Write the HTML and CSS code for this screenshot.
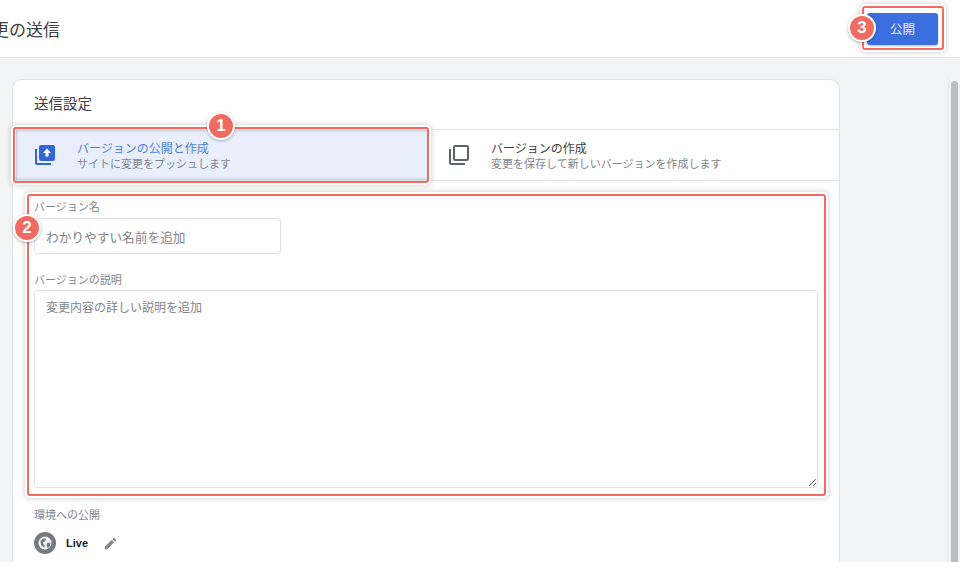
FILE: index.html
```html
<!DOCTYPE html>
<html lang="ja">
<head>
    <meta charset="UTF-8">
    <meta name="viewport" content="width=device-width, initial-scale=1.0">
    <title>変更の送信</title>
    <link rel="stylesheet" href="styles.css">
</head>
<body>
    <header class="topbar">
        <h1 class="page-title">変更の送信</h1>
        <button type="button" class="publish">公開</button>
    </header>
    <div class="content">
        <main class="card">
            <h2 class="card-title">送信設定</h2>
            <div class="tabs">
                <div class="tab tab-active">
                    <svg class="tab-icon" viewBox="0 0 24 24" width="24" height="24">
                        <path fill="#3367d6" d="M2 6h2v14h14v2H4a2 2 0 0 1-2-2V6z"/>
                        <path fill="#3367d6" d="M8 2h12a2 2 0 0 1 2 2v12a2 2 0 0 1-2 2H8a2 2 0 0 1-2-2V4a2 2 0 0 1 2-2z"/>
                        <path fill="#fff" d="M14 5.500l4 4.500h-2.500v3.500h-3V10H10z"/>
                    </svg>
                    <div class="tab-text">
                        <div class="tab-name">バージョンの公開と作成</div>
                        <div class="tab-desc">サイトに変更をプッシュします</div>
                    </div>
                </div>
                <div class="tab">
                    <svg class="tab-icon" viewBox="0 0 24 24" width="24" height="24">
                        <path fill="#5f6368" d="M2 6h2v14h14v2H4a2 2 0 0 1-2-2V6z"/>
                        <path fill="#5f6368" d="M8 2h12a2 2 0 0 1 2 2v12a2 2 0 0 1-2 2H8a2 2 0 0 1-2-2V4a2 2 0 0 1 2-2zm0 2v12h12V4H8z"/>
                    </svg>
                    <div class="tab-text">
                        <div class="tab-name">バージョンの作成</div>
                        <div class="tab-desc">変更を保存して新しいバージョンを作成します</div>
                    </div>
                </div>
            </div>
            <form class="version-form">
                <label class="field-label" for="versionName">バージョン名</label>
                <input class="name-input" type="text" id="versionName" placeholder="わかりやすい名前を追加">
                <label class="field-label desc-label" for="versionDesc">バージョンの説明</label>
                <textarea class="desc-input" id="versionDesc" placeholder="変更内容の詳しい説明を追加"></textarea>
                <div class="field-label env-label">環境への公開</div>
                <div class="env-row">
                    <svg class="env-icon" viewBox="0 0 22 22" width="22" height="22">
                        <circle cx="11" cy="11" r="11" fill="#757a80"/>
                        <circle cx="11" cy="11" r="6.500" fill="#f1f3f4"/>
                        <path fill="#757a80" d="M6.500 9l2.500-2.500 3 .5-1 2.500-2 .5.500 2.500 1.500 1-1 2-3-2.500zM13.500 10.500l3 .5-1 4-2 1-1-3z"/>
                    </svg>
                    <span class="env-name">Live</span>
                    <svg class="env-edit" viewBox="0 0 24 24" width="15" height="15">
                        <path fill="#80868b" d="M3 17.250V21h3.750L17.810 9.940l-3.750-3.750L3 17.250zM20.710 7.040a1 1 0 0 0 0-1.410l-2.340-2.340a1 1 0 0 0-1.410 0l-1.830 1.830 3.750 3.750 1.830-1.830z"/>
                    </svg>
                </div>
            </form>
        </main>
        <div class="scrollbar"><div class="scroll-thumb"></div></div>
    </div>

    <!-- 注釈 -->
    <div class="frame frame-tab"></div>
    <div class="frame frame-form"></div>
    <div class="frame frame-publish"></div>
    <div class="badge badge-1">1</div>
    <div class="badge badge-2">2</div>
    <div class="badge badge-3">3</div>
</body>
</html>
```

FILE: styles.css
```css
* {
    box-sizing: border-box;
}

html, body {
    margin: 0;
    height: 562px;
    overflow: hidden;
}

body {
    font-family: "Noto Sans CJK JP", "Liberation Sans", sans-serif;
    background-color: #f1f3f4;
    color: #202124;
    display: flex;
    flex-direction: column;
}

.topbar {
    height: 58px;
    flex: none;
    background: #fff;
    border-bottom: 1px solid #e0e0e0;
    display: flex;
    align-items: center;
    justify-content: space-between;
    padding-right: 22px;
    overflow: hidden;
}

.page-title {
    margin: 0 0 0 -25px;
    font-size: 17px;
    font-weight: 400;
    color: #3c4043;
    line-height: 24px;
}

.publish {
    width: 71px;
    height: 32px;
    background-color: #3b6fe0;
    color: #e8f0fe;
    border: none;
    border-radius: 3px;
    font-family: inherit;
    font-size: 12.500px;
    box-shadow: 0 1px 2px rgba(0, 0, 0, 0.25);
}

.content {
    flex: 1;
    display: flex;
    justify-content: space-between;
    padding: 21px 0 0 12px;
    min-height: 0;
}

.card {
    width: 828px;
    background: #fff;
    border: 1px solid #e0e2e4;
    border-bottom: none;
    border-radius: 10px 10px 0 0;
    overflow: hidden;
}

.card-title {
    margin: 0;
    padding: 13px 0 0 21px;
    height: 49px;
    font-size: 14.500px;
    font-weight: 400;
    line-height: 20px;
    color: #3c4043;
}

.tabs {
    display: flex;
    height: 52px;
    border-top: 1px solid #dfe1e5;
    border-bottom: 1px solid #dfe1e5;
}

.tab {
    flex: 1;
    display: flex;
    align-items: center;
    padding: 0 0 0 18px;
}

.tab-active {
    flex: none;
    width: 413px;
    margin: 0 0 0 3px;
    padding-left: 17px;
    background-color: #e8effb;
    box-shadow: inset 0 0 3px rgba(60, 64, 67, 0.45);
}

.tab-icon {
    flex: none;
    margin-right: 20px;
}

.tab-name {
    font-size: 12px;
    line-height: 16px;
    color: #3c4043;
}

.tab-active .tab-name {
    color: #4f7fe0;
}

.tab-desc {
    font-size: 11px;
    line-height: 15px;
    color: #80868b;
}

.version-form {
    display: flex;
    flex-direction: column;
    align-items: flex-start;
    padding: 18px 21px 0;
}

.field-label {
    font-size: 11px;
    line-height: 14px;
    color: #80868b;
}

.name-input, .desc-input {
    font-family: inherit;
    font-size: 12px;
    color: #3c4043;
    border: 1px solid #dfe1e5;
    border-radius: 4px;
    padding: 0 11px;
    background: #fff;
    outline: none;
}

.name-input::placeholder, .desc-input::placeholder {
    color: #80868b;
}

.name-input {
    width: 247px;
    height: 36px;
    margin-top: 5px;
    font-size: 12.700px;
}

.desc-label {
    margin-top: 18px;
}

.desc-input {
    width: 784px;
    height: 198px;
    margin-top: 4px;
    padding-top: 7px;
    display: block;
}

.env-label {
    margin-top: 19px;
}

.env-row {
    display: flex;
    align-items: center;
    margin-top: 11px;
}

.env-icon {
    flex: none;
}

.env-name {
    margin-left: 10px;
    font-family: "Liberation Sans", sans-serif;
    font-size: 11px;
    font-weight: 700;
    color: #202124;
}

.env-edit {
    margin-left: 15px;
}

.scrollbar {
    width: 12px;
    padding: 2px 2px 0;
    background: #f1f3f4;
    border-left: 1px solid #e3e5e7;
}

.scroll-thumb {
    height: 100%;
    background-color: #bdbdbd;
    border-radius: 4px 4px 0 0;
}

/* 注釈 */
.frame {
    position: absolute;
    border: 2px solid #f26b63;
    border-radius: 3px;
    box-shadow: 0 0 0 2px #fff, 0 0 5px 3px rgba(0, 0, 0, 0.16);
}

.frame-tab {
    left: 13px;
    top: 127px;
    width: 416px;
    height: 56px;
}

.frame-form {
    left: 27px;
    top: 194px;
    width: 799px;
    height: 302px;
}

.frame-publish {
    left: 862px;
    top: 6px;
    width: 82px;
    height: 44px;
}

.badge {
    position: absolute;
    width: 28px;
    height: 28px;
    background-color: #f26b63;
    border: 2px solid #fff;
    border-radius: 50%;
    box-shadow: 0 1px 3px rgba(0, 0, 0, 0.3);
    color: #fff;
    font-family: "Liberation Sans", sans-serif;
    font-size: 17px;
    font-weight: 700;
    line-height: 24px;
    text-align: center;
}

.badge-1 {
    left: 207px;
    top: 112px;
}

.badge-2 {
    left: 13px;
    top: 214px;
}

.badge-3 {
    left: 848px;
    top: 14px;
}
```
